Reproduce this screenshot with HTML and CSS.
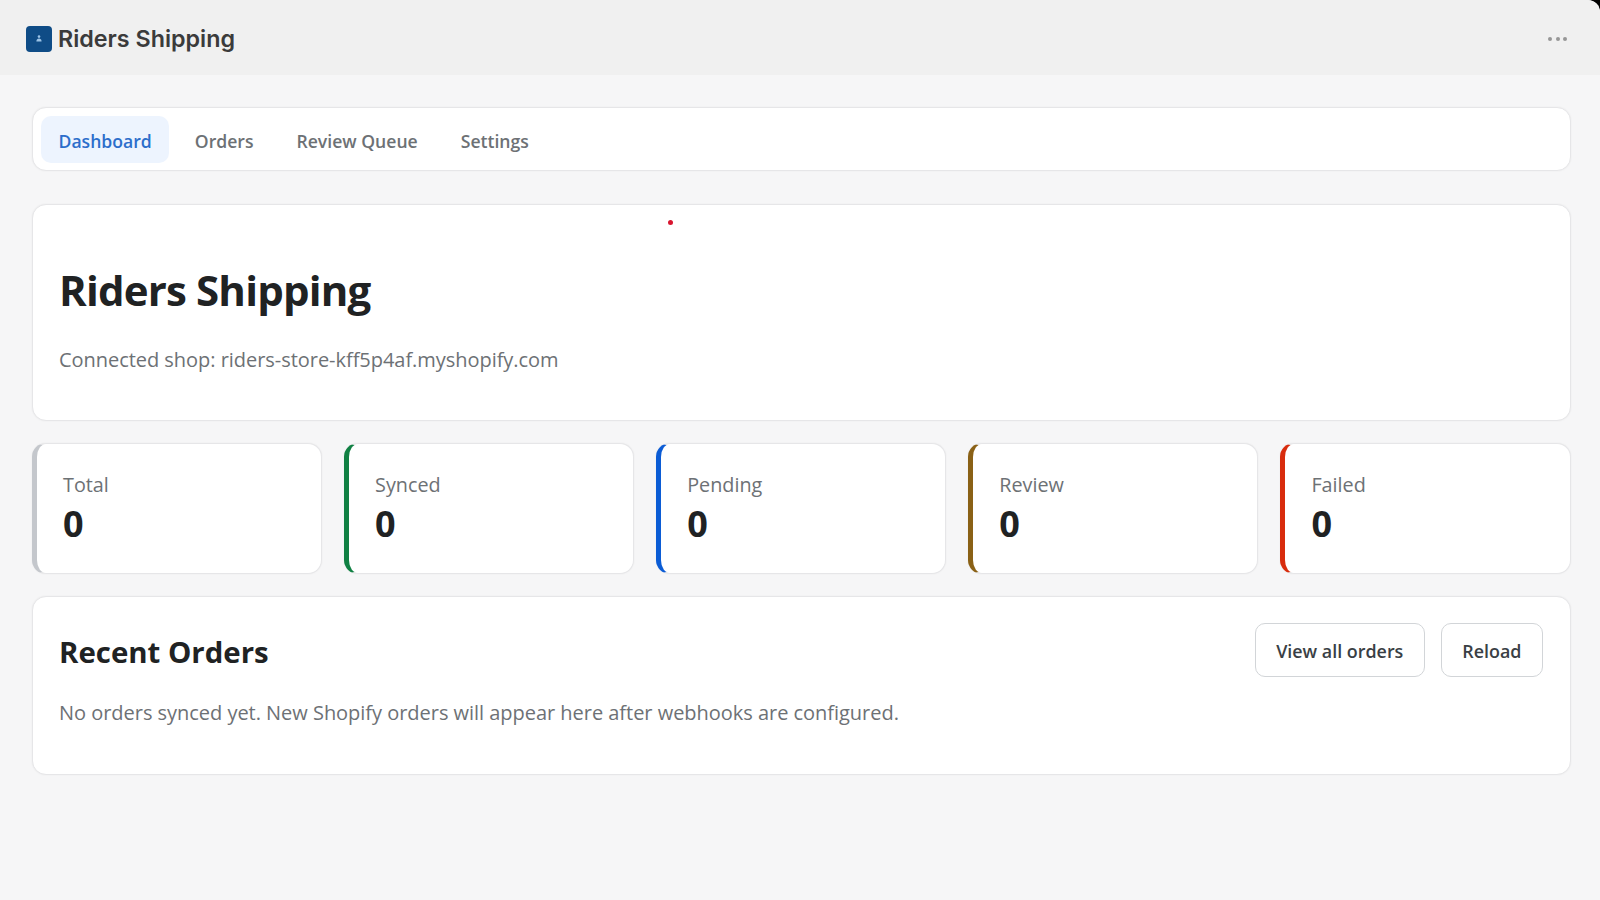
FILE: index.html
```html
<!DOCTYPE html>
<html lang="en">
<head>
  <meta charset="UTF-8">
  <meta name="viewport" content="width=device-width, initial-scale=1.0">
  <title>Riders Shipping</title>
  <link rel="stylesheet" href="styles.css">
</head>
<body>
  <div class="topbar">
    <div class="app-title">
      <span class="app-logo">
        <svg width="6" height="7" viewBox="0 0 6 7"><circle cx="3" cy="1.6" r="1.3" fill="#9cc3e6"/><path d="M0.4 6.4c0-2.2 1.2-3 2.6-3s2.6 .8 2.6 3z" fill="#9cc3e6"/></svg>
      </span>
      <span class="app-name">Riders Shipping</span>
    </div>
    <div class="more-dots"><i></i><i></i><i></i></div>
  </div>
  <div class="container">
    <nav class="card tabs">
      <a class="tab active">Dashboard</a>
      <a class="tab">Orders</a>
      <a class="tab">Review Queue</a>
      <a class="tab">Settings</a>
    </nav>
    <section class="card hero">
      <span class="red-dot"></span>
      <h1>Riders Shipping</h1>
      <p>Connected shop: riders-store-kff5p4af.myshopify.com</p>
    </section>
    <div class="stats">
      <div class="stat stat-total"><div class="stat-label">Total</div><div class="stat-value">0</div></div>
      <div class="stat stat-synced"><div class="stat-label">Synced</div><div class="stat-value">0</div></div>
      <div class="stat stat-pending"><div class="stat-label">Pending</div><div class="stat-value">0</div></div>
      <div class="stat stat-review"><div class="stat-label">Review</div><div class="stat-value">0</div></div>
      <div class="stat stat-failed"><div class="stat-label">Failed</div><div class="stat-value">0</div></div>
    </div>
    <section class="card orders">
      <div class="orders-head">
        <h2>Recent Orders</h2>
        <div class="orders-actions">
          <button class="btn">View all orders</button>
          <button class="btn">Reload</button>
        </div>
      </div>
      <p>No orders synced yet. New Shopify orders will appear here after webhooks are configured.</p>
    </section>
  </div>
</body>
</html>
```

FILE: styles.css
```css
html {
  background-color: #000;
}
body {
  margin: 0;
  min-height: 100vh;
  background-color: #f6f6f7;
  border-top-right-radius: 12px;
  font-family: 'Open Sans', 'Noto Sans', sans-serif;
  color: #202223;
  overflow: hidden;
}
.topbar {
  height: 75px;
  box-sizing: border-box;
  padding: 2px 32px 0 26px;
  display: flex;
  align-items: center;
  justify-content: space-between;
  background-color: #f0f0f0;
  border-top-right-radius: 12px;
}
.app-title {
  display: flex;
  align-items: center;
  gap: 6px;
}
.app-logo {
  width: 26px;
  height: 26px;
  border-radius: 4px;
  background-color: #0f4c86;
  display: flex;
  align-items: center;
  justify-content: center;
}
.app-name {
  font-family: 'Inter', sans-serif;
  font-size: 23.3px;
  font-weight: 600;
  color: #3b3b3b;
}
.more-dots {
  display: flex;
  gap: 3.5px;
  margin-right: 1px;
}
.more-dots i {
  width: 4px;
  height: 4px;
  border-radius: 50%;
  background-color: #969696;
}
.container {
  padding: 32px 29.5px 0 32px;
  display: flex;
  flex-direction: column;
}
.card {
  background-color: #fff;
  border: 1px solid #e6e6e8;
  border-radius: 14px;
  box-shadow: 0 0 2px rgba(0, 0, 0, 0.06);
}
.tabs {
  height: 64px;
  box-sizing: border-box;
  padding: 8px;
  display: flex;
  gap: 8px;
}
.tab {
  padding: 3px 17.5px 0;
  height: 47px;
  box-sizing: border-box;
  display: flex;
  align-items: center;
  border-radius: 10px;
  font-size: 17.6px;
  font-weight: 600;
  color: #6d7175;
}
.tab.active {
  background-color: #edf4fe;
  color: #2c6ecb;
}
.hero {
  position: relative;
  margin-top: 33px;
  height: 217px;
  box-sizing: border-box;
  padding: 57px 26px 0;
}
.red-dot {
  position: absolute;
  left: 635px;
  top: 15px;
  width: 5px;
  height: 5px;
  border-radius: 50%;
  background-color: #d8152f;
}
.hero h1 {
  margin: 0;
  font-size: 42px;
  line-height: 56px;
  font-weight: 700;
  letter-spacing: -0.82px;
}
.hero p {
  margin: 28px 0 0;
  font-size: 20px;
  line-height: 28px;
  letter-spacing: -0.04px;
  color: #6d7175;
}
.stats {
  margin-top: 22px;
  display: grid;
  grid-template-columns: repeat(5, 1fr);
  gap: 22px;
}
.stat {
  height: 131px;
  box-sizing: border-box;
  padding: 27px 26px 0;
  background-color: #fff;
  border: 1px solid #e6e6e8;
  border-left: 5px solid #c4c7cc;
  border-radius: 14px;
  box-shadow: 0 0 2px rgba(0, 0, 0, 0.06);
}
.stat-synced { border-left-color: #108043; }
.stat-pending { border-left-color: #0b5cd5; }
.stat-review { border-left-color: #8a6116; }
.stat-failed { border-left-color: #d82c0d; }
.stat-label {
  font-size: 19.8px;
  line-height: 28px;
  color: #6d7175;
}
.stat-value {
  font-size: 36px;
  line-height: 50px;
  font-weight: 700;
}
.orders {
  margin-top: 22px;
  height: 179px;
  box-sizing: border-box;
  padding: 26px 26px 0;
}
.orders-head {
  display: flex;
  align-items: center;
  justify-content: space-between;
}
.orders h2 {
  margin: 0;
  padding-top: 4px;
  font-size: 29.4px;
  font-weight: 700;
}
.orders-actions {
  display: flex;
  gap: 16px;
  margin-right: 0.5px;
}
.btn {
  height: 54px;
  padding: 2px 20.5px 0;
  background-color: #fff;
  border: 1.5px solid #d2d5d8;
  border-radius: 10px;
  font-family: inherit;
  font-size: 17.9px;
  font-weight: 600;
  color: #3a3f45;
}
.orders p {
  margin: 22px 0 0;
  font-size: 20px;
  line-height: 28px;
  letter-spacing: -0.03px;
  color: #6d7175;
}
```
